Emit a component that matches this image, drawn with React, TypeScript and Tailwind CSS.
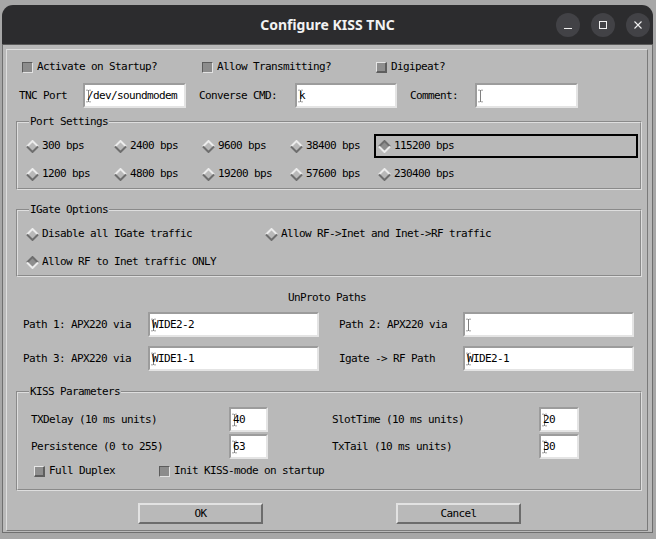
import React from 'react'

const FONT = "font-['DejaVu_Sans_Mono',monospace] text-[11px] tracking-[-0.62px] leading-[12px] text-black"

function Cursor() {
  return (
    <svg width="5" height="13" viewBox="0 0 5 13" className="absolute left-[1px] top-1/2 -translate-y-1/2">
      <path d="M0.5 0.5h1M3.5 0.5h1M0.5 12.5h1M3.5 12.5h1" stroke="#000" strokeWidth="1" />
      <line x1="2.5" y1="1" x2="2.5" y2="12" stroke="#000" strokeWidth="1" strokeDasharray="1 1" />
    </svg>
  )
}

function Entry({ value = '', w }: { value?: string; w: string }) {
  return (
    <div
      className={`${w} relative h-[25px] border-2 border-t-[#9c9c9c] border-l-[#9c9c9c] border-b-[#e4e4e4] border-r-[#e4e4e4] bg-white flex items-center pl-[2px] overflow-hidden whitespace-nowrap`}
    >
      <Cursor />
      <span>{value}</span>
    </div>
  )
}

function Check({ on, label }: { on: boolean; label: string }) {
  return (
    <div className="flex items-center h-[20px]">
      <span
        className={
          on
            ? 'w-[11px] h-[11px] border border-t-[#5c5c5c] border-l-[#5c5c5c] border-b-[#e2e2e2] border-r-[#e2e2e2] bg-[#8c8c8c]'
            : 'w-[11px] h-[11px] border-t border-l border-b-2 border-r-2 border-t-[#e6e6e6] border-l-[#e6e6e6] border-b-[#5e5e5e] border-r-[#5e5e5e] bg-[#8e8e8e]'
        }
      />
      <span className="ml-[4px]">{label}</span>
    </div>
  )
}

function Diamond({ on }: { on: boolean }) {
  const top = on ? '#6e6e6e' : '#ececec'
  const bottom = on ? '#ececec' : '#6e6e6e'
  return (
    <svg width="13" height="13" viewBox="0 0 13 13" className="shrink-0">
      <polygon points="6.5,1 12,6.5 6.5,12 1,6.5" fill={on ? '#8e8e8e' : '#b9b9b9'} />
      <polyline points="1,6.5 6.5,1 12,6.5" stroke={top} strokeWidth="2" fill="none" />
      <polyline points="1,6.5 6.5,12 12,6.5" stroke={bottom} strokeWidth="2" fill="none" />
    </svg>
  )
}

function Radio({ label, on = false, focus = false }: { label: string; on?: boolean; focus?: boolean }) {
  return (
    <div className={`h-[24px] flex items-center pl-[2px] border-2 ${focus ? 'border-black' : 'border-transparent'}`}>
      <Diamond on={on} />
      <span className="ml-[3px] whitespace-nowrap">{label}</span>
    </div>
  )
}

function Group({ title, className, children }: { title: string; className: string; children: React.ReactNode }) {
  return (
    <fieldset className={`ml-[9px] w-[626px] [border:2px_groove_#dedede] ${className}`}>
      <legend className="ml-[11px] px-[1px] leading-[12px]">{title}</legend>
      {children}
    </fieldset>
  )
}

const BAUDS = [
  ['300 bps', '2400 bps', '9600 bps', '38400 bps', '115200 bps'],
  ['1200 bps', '4800 bps', '19200 bps', '57600 bps', '230400 bps'],
]

export default function App() {
  return (
    <div className="w-[656px] h-[539px] bg-[#a7a7a7] pt-[5px] pl-[2px]">
      <div className="w-[651px] h-[528px] flex flex-col">
        <div className="h-[39px] rounded-t-[11px] bg-[#2c2c2e] relative flex items-center justify-center">
          <span className="font-['Noto_Sans',sans-serif] text-[14px] font-bold text-[#f2f2f2]">Configure KISS TNC</span>
          <div className="absolute right-[3px] top-[8px] flex gap-[11px]">
            <span className="w-[24px] h-[24px] rounded-full bg-[#424246] flex items-center justify-center">
              <svg width="10" height="10" viewBox="0 0 10 10">
                <line x1="1" y1="8.5" x2="9" y2="8.5" stroke="#f0f0f0" strokeWidth="1" />
              </svg>
            </span>
            <span className="w-[24px] h-[24px] rounded-full bg-[#424246] flex items-center justify-center">
              <svg width="10" height="10" viewBox="0 0 10 10">
                <rect x="1.5" y="1.5" width="7" height="7" stroke="#f0f0f0" strokeWidth="1" fill="none" />
              </svg>
            </span>
            <span className="w-[24px] h-[24px] rounded-full bg-[#424246] flex items-center justify-center">
              <svg width="10" height="10" viewBox="0 0 10 10">
                <path d="M1.5 1.5L8.5 8.5M8.5 1.5L1.5 8.5" stroke="#f0f0f0" strokeWidth="1.1" />
              </svg>
            </span>
          </div>
        </div>

        <div className="flex-1 flex bg-[#b9b9b9] border-x border-b border-t border-[#6f6f6f] border-t-[#5a5a5a] pt-[4px] pl-[3px] pr-[4px] pb-[1px]">
          <div className={`flex-1 flex flex-col border border-t-[#dedede] border-l-[#dedede] border-b-[#7a7a7a] border-r-[#7a7a7a] ${FONT}`}>
            {/* top checkboxes */}
            <div className="mt-[7px] pl-[15px] flex">
              <div className="w-[180px]"><Check on label="Activate on Startup?" /></div>
              <div className="w-[174px]"><Check on label="Allow Transmitting?" /></div>
              <Check on={false} label="Digipeat?" />
            </div>

            {/* port row */}
            <div className="mt-[6px] pl-[12px] flex items-center">
              <span className="w-[64px]">TNC Port</span>
              <Entry w="w-[103px]" value="/dev/soundmodem" />
              <span className="ml-[13px] w-[96px]">Converse CMD:</span>
              <Entry w="w-[102px]" value="k" />
              <span className="ml-[13px] w-[65px]">Comment:</span>
              <Entry w="w-[103px]" />
            </div>

            <Group title="Port Settings" className="mt-[8px]">
              <div className="pt-[6px] pl-[4px] pr-[2px] pb-[2px] grid grid-cols-[88px_88px_88px_88px_1fr] gap-y-[4px]">
                {BAUDS.flat().map((b) => (
                  <Radio key={b} label={b} on={b === '115200 bps'} focus={b === '115200 bps'} />
                ))}
              </div>
            </Group>

            <Group title="IGate Options" className="mt-[14px]">
              <div className="pt-[6px] pl-[4px] pb-[1px] grid grid-cols-[239px_1fr] gap-y-[4px]">
                <Radio label="Disable all IGate traffic" />
                <Radio label="Allow RF->Inet and Inet->RF traffic" />
                <Radio label="Allow RF to Inet traffic ONLY" on />
              </div>
            </Group>

            <div className="mt-[15px] text-center">UnProto Paths</div>

            <div className="mt-[8px] pl-[16px] grid grid-cols-[125px_171px_20px_124px_171px] gap-y-[9px] items-center">
              <span>Path 1: APX220 via</span>
              <Entry w="w-[171px]" value="WIDE2-2" />
              <span />
              <span>Path 2: APX220 via</span>
              <Entry w="w-[171px]" />
              <span>Path 3: APX220 via</span>
              <Entry w="w-[171px]" value="WIDE1-1" />
              <span />
              <span>Igate -&gt; RF Path</span>
              <Entry w="w-[171px]" value="WIDE2-1" />
            </div>

            <Group title="KISS Parameters" className="mt-[15px]">
              <div className="pt-[9px] pl-[13px] pb-[8px]">
                <div className="grid grid-cols-[198px_39px_64px_207px_40px] gap-y-[2px] items-center">
                  <span>TXDelay (10 ms units)</span>
                  <Entry w="w-[39px]" value="40" />
                  <span />
                  <span>SlotTime (10 ms units)</span>
                  <Entry w="w-[40px]" value="20" />
                  <span>Persistence (0 to 255)</span>
                  <Entry w="w-[39px]" value="63" />
                  <span />
                  <span>TxTail (10 ms units)</span>
                  <Entry w="w-[40px]" value="30" />
                </div>
                <div className="mt-[2px] pl-[3px] flex">
                  <div className="w-[125px]"><Check on={false} label="Full Duplex" /></div>
                  <Check on label="Init KISS-mode on startup" />
                </div>
              </div>
            </Group>

            <div className="mt-[12px] pl-[131px] flex gap-[133px]">
              <button className="w-[125px] h-[21px] border-2 border-t-[#e2e2e2] border-l-[#e2e2e2] border-b-[#6c6c6c] border-r-[#6c6c6c] bg-[#b9b9b9] flex items-center justify-center">
                OK
              </button>
              <button className="w-[125px] h-[21px] border-2 border-t-[#e2e2e2] border-l-[#e2e2e2] border-b-[#6c6c6c] border-r-[#6c6c6c] bg-[#b9b9b9] flex items-center justify-center">
                Cancel
              </button>
            </div>
          </div>
        </div>
      </div>
    </div>
  )
}
